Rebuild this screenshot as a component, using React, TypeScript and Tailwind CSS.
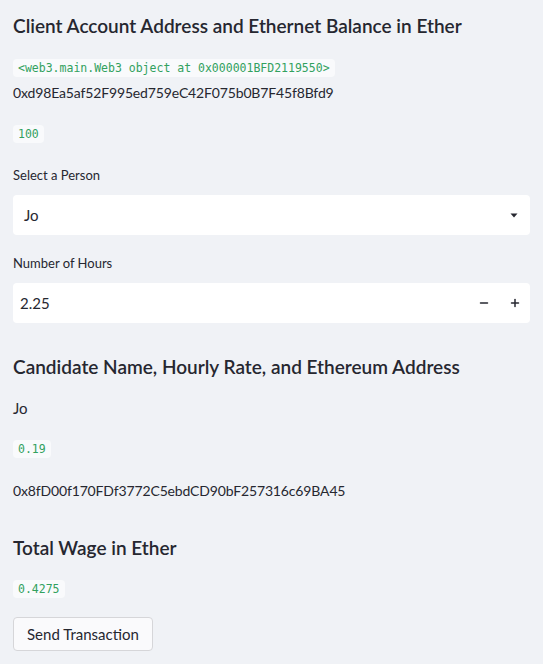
import { Minus, Plus } from "lucide-react";

const sans = "font-['Source_Sans_Pro','Lato','Liberation_Sans',sans-serif]";

function Code({ children, className = "" }: { children: React.ReactNode; className?: string }) {
  return (
    <div className={"flex " + className}>
      <span className="bg-[#f9fafc] rounded px-[5px] h-[18px] leading-[18px] text-[11.5px] text-[#32a15e] font-['DejaVu_Sans_Mono',monospace]">
        {children}
      </span>
    </div>
  );
}

export default function App() {
  return (
    <div className={"min-h-screen bg-[#f0f2f6] text-[#262730] px-[13px] pt-[14px] pb-4 " + sans}>
      <h3 className="text-[19px] leading-[24px] font-semibold">
        Client Account Address and Ethernet Balance in Ether
      </h3>
      <Code className="mt-[21px]">{"<web3.main.Web3 object at 0x000001BFD2119550>"}</Code>
      <p className="mt-[6px] text-[14px] tracking-[-0.15px] leading-[20px]">0xd98Ea5af52F995ed759eC42F075b0B7F45f8Bfd9</p>
      <Code className="mt-[22px]">100</Code>

      <label className="block mt-[22px] text-[13px] leading-[20px]">Select a Person</label>
      <div className="mt-[10px] h-[40px] bg-white rounded flex items-center justify-between pl-[11px] pr-[12px]">
        <span className="text-[15px]">Jo</span>
        <svg width="8" height="5" viewBox="0 0 8 5">
          <path d="M0.5 0.5 L7.5 0.5 L4 4.5 Z" fill="#262730" />
        </svg>
      </div>

      <label className="block mt-[18px] text-[13px] leading-[20px]">Number of Hours</label>
      <div className="mt-[10px] h-[40px] bg-white rounded flex items-center justify-between pl-[7px]">
        <span className="text-[15px]">2.25</span>
        <div className="flex h-full">
          <button className="w-[32px] flex items-center justify-center">
            <Minus size={12} strokeWidth={3} />
          </button>
          <button className="w-[30px] flex items-center justify-center">
            <Plus size={12} strokeWidth={3} />
          </button>
        </div>
      </div>

      <h3 className="mt-[32px] text-[19px] leading-[24px] font-semibold">
        Candidate Name, Hourly Rate, and Ethereum Address
      </h3>
      <p className="mt-[19px] text-[15px] leading-[20px]">Jo</p>
      <Code className="mt-[22px]">0.19</Code>
      <p className="mt-[23px] text-[14px] tracking-[-0.15px] leading-[20px]">0x8fD00f170FDf3772C5ebdCD90bF257316c69BA45</p>

      <h3 className="mt-[35px] text-[19px] leading-[24px] font-semibold">Total Wage in Ether</h3>
      <Code className="mt-[20px]">0.4275</Code>
      <button className="mt-[19px] h-[34px] px-[13px] bg-[#fafafc] border border-[#d6d6d9] rounded text-[15px]">
        Send Transaction
      </button>
    </div>
  );
}
